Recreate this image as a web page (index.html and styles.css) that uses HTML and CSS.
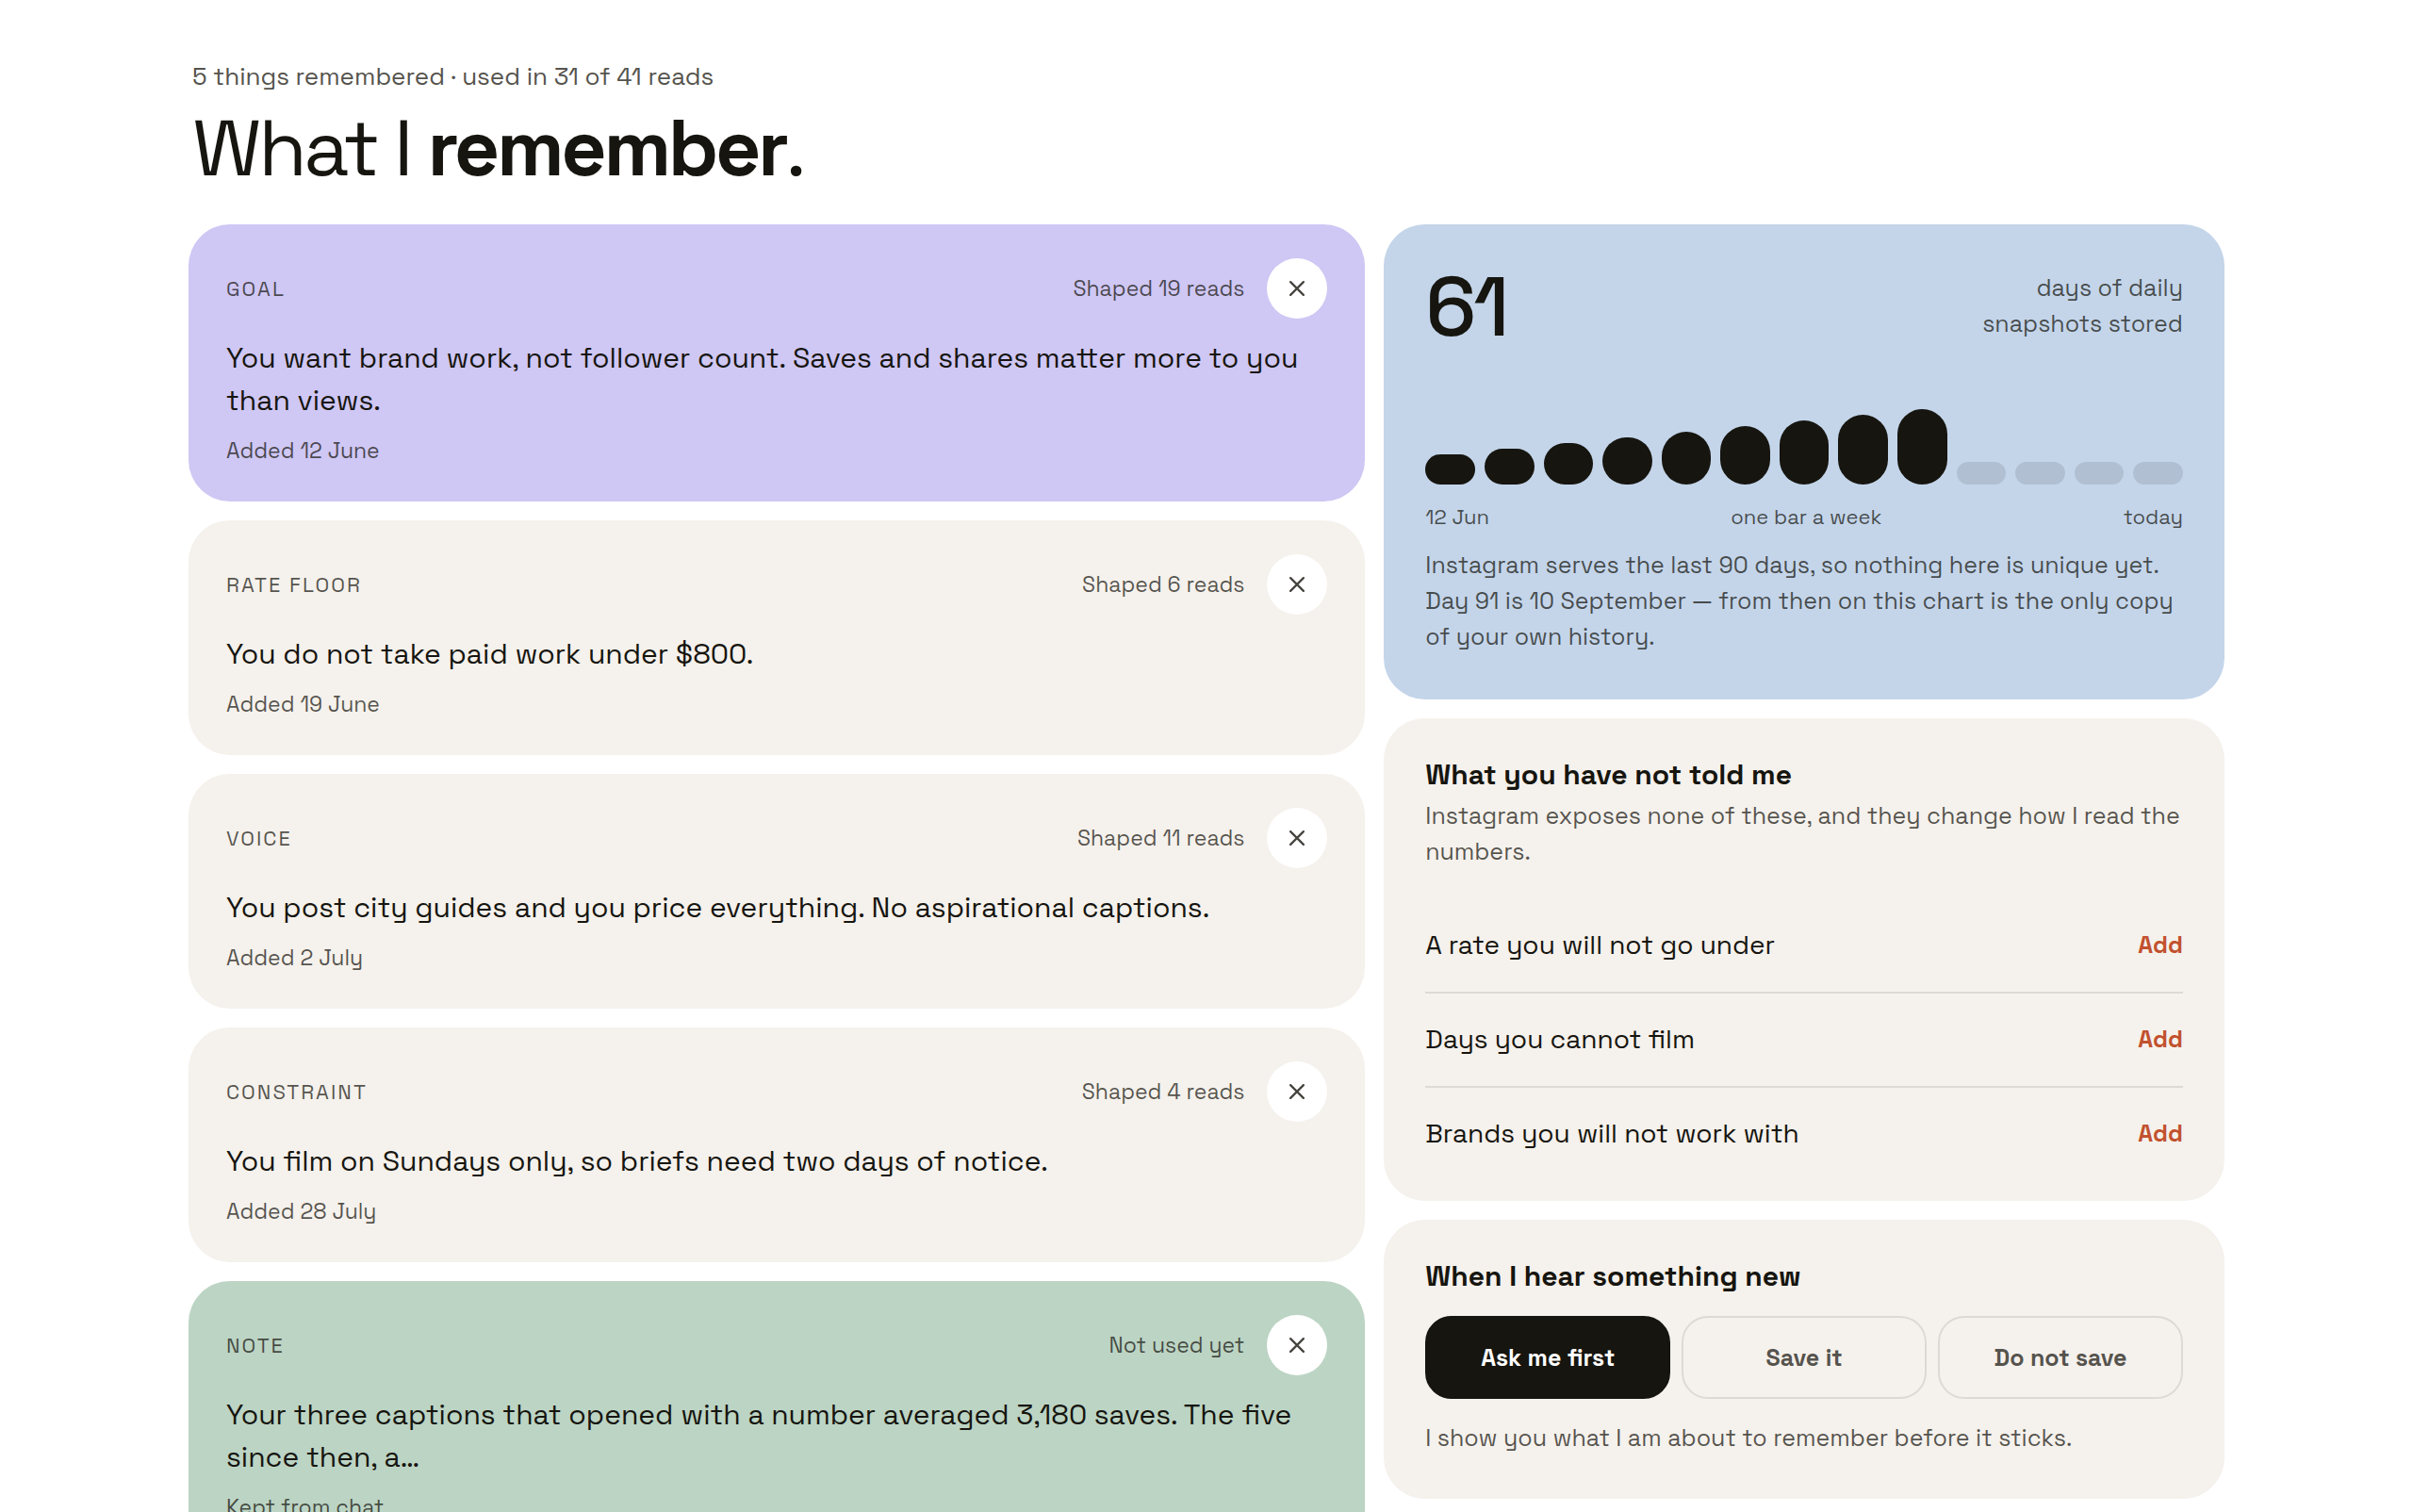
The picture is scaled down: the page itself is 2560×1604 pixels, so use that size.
FILE: index.html
```html
<!DOCTYPE html>
<html lang="en">
<head>
    <meta charset="UTF-8">
    <meta name="viewport" content="width=device-width, initial-scale=1.0">
    <title>What I remember</title>
    <link rel="stylesheet" href="styles.css">
</head>
<body>
<main class="page">
    <header class="page-header">
        <p class="summary">5 things remembered · used in 31 of 41 reads</p>
        <h1>What I <strong>remember</strong>.</h1>
    </header>

    <div class="columns">
        <!-- Remembered items -->
        <section class="column">
            <article class="card memory purple">
                <div class="memory-head">
                    <span class="tag">Goal</span>
                    <span class="usage">Shaped 19 reads</span>
                    <button class="remove" aria-label="Forget this"><svg viewBox="0 0 14 14"><path d="M1 1l12 12M13 1L1 13"/></svg></button>
                </div>
                <p class="memory-text">You want brand work, not follower count. Saves and shares matter more to you than views.</p>
                <p class="added">Added 12 June</p>
            </article>

            <article class="card memory">
                <div class="memory-head">
                    <span class="tag">Rate floor</span>
                    <span class="usage">Shaped 6 reads</span>
                    <button class="remove" aria-label="Forget this"><svg viewBox="0 0 14 14"><path d="M1 1l12 12M13 1L1 13"/></svg></button>
                </div>
                <p class="memory-text">You do not take paid work under $800.</p>
                <p class="added">Added 19 June</p>
            </article>

            <article class="card memory">
                <div class="memory-head">
                    <span class="tag">Voice</span>
                    <span class="usage">Shaped 11 reads</span>
                    <button class="remove" aria-label="Forget this"><svg viewBox="0 0 14 14"><path d="M1 1l12 12M13 1L1 13"/></svg></button>
                </div>
                <p class="memory-text">You post city guides and you price everything. No aspirational captions.</p>
                <p class="added">Added 2 July</p>
            </article>

            <article class="card memory">
                <div class="memory-head">
                    <span class="tag">Constraint</span>
                    <span class="usage">Shaped 4 reads</span>
                    <button class="remove" aria-label="Forget this"><svg viewBox="0 0 14 14"><path d="M1 1l12 12M13 1L1 13"/></svg></button>
                </div>
                <p class="memory-text">You film on Sundays only, so briefs need two days of notice.</p>
                <p class="added">Added 28 July</p>
            </article>

            <article class="card memory green">
                <div class="memory-head">
                    <span class="tag">Note</span>
                    <span class="usage">Not used yet</span>
                    <button class="remove" aria-label="Forget this"><svg viewBox="0 0 14 14"><path d="M1 1l12 12M13 1L1 13"/></svg></button>
                </div>
                <p class="memory-text">Your three captions that opened with a number averaged 3,180 saves. The five since then, a…</p>
                <p class="added">Kept from chat</p>
            </article>
        </section>

        <section class="column">
            <!-- Snapshot history -->
            <article class="card history">
                <div class="history-head">
                    <span class="days">61</span>
                    <p class="note days-label">days of daily<br>snapshots stored</p>
                </div>
                <div class="chart">
                    <span class="bar" style="height: 32px"></span>
                    <span class="bar" style="height: 38px"></span>
                    <span class="bar" style="height: 44px"></span>
                    <span class="bar" style="height: 50px"></span>
                    <span class="bar" style="height: 56px"></span>
                    <span class="bar" style="height: 62px"></span>
                    <span class="bar" style="height: 68px"></span>
                    <span class="bar" style="height: 74px"></span>
                    <span class="bar" style="height: 80px"></span>
                    <span class="bar empty"></span>
                    <span class="bar empty"></span>
                    <span class="bar empty"></span>
                    <span class="bar empty"></span>
                </div>
                <div class="axis">
                    <span>12 Jun</span>
                    <span>one bar a week</span>
                    <span>today</span>
                </div>
                <p class="note">Instagram serves the last 90 days, so nothing here is unique yet. Day 91 is 10 September — from then on this chart is the only copy of your own history.</p>
            </article>

            <!-- Missing facts -->
            <article class="card missing">
                <h2>What you have not told me</h2>
                <p class="note">Instagram exposes none of these, and they change how I read the numbers.</p>
                <ul class="missing-list">
                    <li>A rate you will not go under <button class="add">Add</button></li>
                    <li>Days you cannot film <button class="add">Add</button></li>
                    <li>Brands you will not work with <button class="add">Add</button></li>
                </ul>
            </article>

            <!-- Saving preference -->
            <article class="card preference">
                <h2>When I hear something new</h2>
                <div class="options">
                    <button class="option active" aria-pressed="true">Ask me first</button>
                    <button class="option" aria-pressed="false">Save it</button>
                    <button class="option" aria-pressed="false">Do not save</button>
                </div>
                <p class="note">I show you what I am about to remember before it sticks.</p>
            </article>
        </section>
    </div>
</main>
</body>
</html>
```

FILE: styles.css
```css
* {
    box-sizing: border-box;
}

body {
    margin: 0;
    background: #fff;
    color: #16150f;
    font-family: "Space Grotesk", Inter, "Liberation Sans", sans-serif;
}

h1, h2, p, ul {
    margin: 0;
    padding: 0;
}

button {
    font-family: inherit;
    cursor: pointer;
}

.page {
    max-width: 2240px;
    margin: 0 auto;
    padding: 61px 40px;
}

.page-header {
    padding-left: 4px;
    margin-bottom: 33px;
}

.summary {
    font-size: 26px;
    line-height: 40px;
    color: #55534d;
}

h1 {
    margin-top: 8px;
    font-size: 84px;
    line-height: 96px;
    font-weight: 400;
    letter-spacing: -0.04em;
}

h1 strong {
    font-weight: 700;
}

h2 {
    font-size: 30px;
    line-height: 40px;
    font-weight: 600;
}

.columns {
    display: grid;
    grid-template-columns: 1.4fr 1fr;
    gap: 20px;
    align-items: start;
}

.column {
    display: flex;
    flex-direction: column;
    gap: 20px;
}

.card {
    background: #f5f1ec;
    border-radius: 44px;
}

.note {
    font-size: 25px;
    line-height: 38px;
    color: rgba(22, 21, 15, 0.72);
}

/* Memory cards */
.memory {
    padding: 36px 40px;
}

.purple {
    background: #cfc7f4;
}

.green {
    background: #bcd4c4;
}

.memory-head {
    display: flex;
    align-items: center;
    gap: 24px;
}

.tag {
    flex: 1;
    font-size: 22px;
    letter-spacing: 2px;
    text-transform: uppercase;
    color: rgba(22, 21, 15, 0.72);
}

.usage {
    font-size: 23px;
    color: rgba(22, 21, 15, 0.72);
}

.remove {
    display: flex;
    align-items: center;
    justify-content: center;
    width: 64px;
    height: 64px;
    padding: 0;
    border: none;
    border-radius: 50%;
    background: #fff;
}

.remove svg {
    width: 16px;
    height: 16px;
    fill: none;
    stroke: #45443f;
    stroke-width: 2;
    stroke-linecap: round;
}

.memory-text {
    margin-top: 19px;
    font-size: 30px;
    line-height: 45px;
}

.added {
    margin-top: 13px;
    font-size: 23px;
    line-height: 36px;
    color: rgba(22, 21, 15, 0.72);
}

/* Snapshot history */
.history {
    padding: 48px 44px;
    background: #c4d5ea;
}

.history-head {
    display: flex;
    justify-content: space-between;
}

.days {
    font-size: 88px;
    line-height: 80px;
    font-weight: 500;
    letter-spacing: -3px;
}

.days-label {
    text-align: right;
}

.chart {
    display: flex;
    align-items: flex-end;
    gap: 10px;
    height: 100px;
    margin-top: 48px;
}

.bar {
    flex: 1;
    border-radius: 999px;
    background: #16150f;
}

.bar.empty {
    height: 24px;
    background: rgba(22, 21, 15, 0.11);
}

.axis {
    display: flex;
    justify-content: space-between;
    margin: 16px 0 14px;
    font-size: 22px;
    line-height: 36px;
    color: rgba(22, 21, 15, 0.72);
}

/* Missing facts */
.missing {
    padding: 40px 44px 22px;
}

.missing .note {
    margin-top: 4px;
}

.missing-list {
    margin-top: 32px;
    list-style: none;
}

.missing-list li {
    display: flex;
    align-items: center;
    justify-content: space-between;
    padding: 28px 0 30px;
    font-size: 28px;
    line-height: 40px;
    border-bottom: 2px solid #dddad4;
}

.missing-list li:last-child {
    border-bottom: none;
}

.add {
    padding: 0;
    border: none;
    background: none;
    font-size: 25px;
    font-weight: 600;
    color: #c2512f;
}

/* Saving preference */
.preference {
    padding: 40px 44px 46px;
}

.options {
    display: grid;
    grid-template-columns: repeat(3, 1fr);
    gap: 12px;
    margin: 22px 0;
}

.option {
    height: 88px;
    border: 2px solid #dddad4;
    border-radius: 28px;
    background: none;
    font-size: 25px;
    font-weight: 600;
    color: #55534d;
}

.option.active {
    border-color: #16150f;
    background: #16150f;
    color: #fff;
}
```
